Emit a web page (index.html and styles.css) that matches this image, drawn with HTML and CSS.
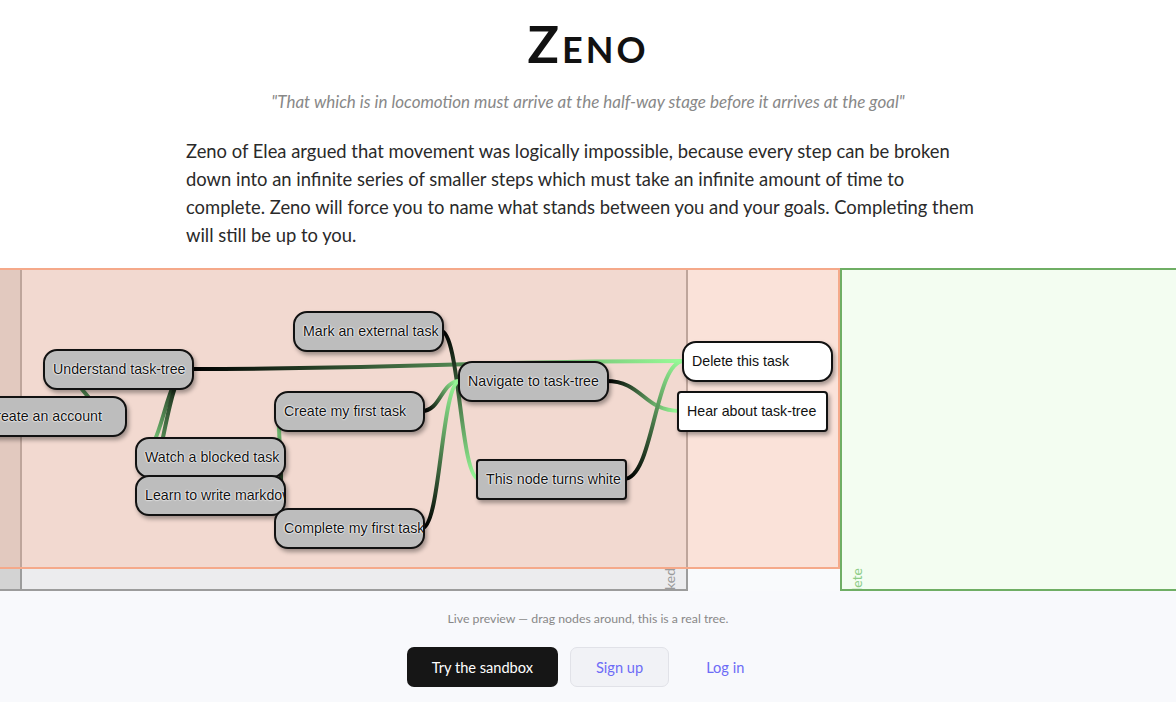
FILE: index.html
```html
<!DOCTYPE html>
<html lang="en">
<head>
<meta charset="utf-8">
<title>Zeno</title>
<link rel="stylesheet" href="styles.css">
</head>
<body>
<header class="hero">
  <h1 class="title">Zeno</h1>
  <p class="quote">"That which is in locomotion must arrive at the half-way stage before it arrives at the goal"</p>
  <p class="intro">Zeno of Elea argued that movement was logically impossible, because every step can be broken down into an infinite series of smaller steps which must take an infinite amount of time to complete. Zeno will force you to name what stands between you and your goals. Completing them will still be up to you.</p>
</header>

<section class="board">
  <div class="lanes">
    <div class="lane lane-root"></div>
    <div class="lane lane-blocked"><span class="lane-label">Blocked</span></div>
    <div class="lane lane-open"></div>
    <div class="lane lane-complete"><span class="lane-label">Complete</span></div>
  </div>

  <div class="zone"></div>

  <svg class="edges" width="1176" height="323" viewBox="0 0 1176 323">
    <defs>
      <linearGradient id="g1" gradientUnits="userSpaceOnUse" x1="193" y1="101" x2="682" y2="93"><stop offset="0" stop-color="#000"/><stop offset="1" stop-color="#98fb98"/></linearGradient>
      <linearGradient id="g2" gradientUnits="userSpaceOnUse" x1="193" y1="101" x2="135" y2="189"><stop offset="0" stop-color="#000"/><stop offset="1" stop-color="#98fb98"/></linearGradient>
      <linearGradient id="g3" gradientUnits="userSpaceOnUse" x1="193" y1="101" x2="135" y2="228"><stop offset="0" stop-color="#000"/><stop offset="1" stop-color="#98fb98"/></linearGradient>
      <linearGradient id="g4" gradientUnits="userSpaceOnUse" x1="127" y1="149" x2="43" y2="101"><stop offset="0" stop-color="#000"/><stop offset="1" stop-color="#98fb98"/></linearGradient>
      <linearGradient id="g5" gradientUnits="userSpaceOnUse" x1="444" y1="63" x2="476" y2="211"><stop offset="0" stop-color="#000"/><stop offset="1" stop-color="#98fb98"/></linearGradient>
      <linearGradient id="g6" gradientUnits="userSpaceOnUse" x1="425" y1="143" x2="458" y2="113"><stop offset="0" stop-color="#000"/><stop offset="1" stop-color="#98fb98"/></linearGradient>
      <linearGradient id="g7" gradientUnits="userSpaceOnUse" x1="425" y1="260" x2="458" y2="113"><stop offset="0" stop-color="#000"/><stop offset="1" stop-color="#98fb98"/></linearGradient>
      <linearGradient id="g8" gradientUnits="userSpaceOnUse" x1="609" y1="113" x2="677" y2="143"><stop offset="0" stop-color="#000"/><stop offset="1" stop-color="#98fb98"/></linearGradient>
      <linearGradient id="g9" gradientUnits="userSpaceOnUse" x1="627" y1="211" x2="682" y2="93"><stop offset="0" stop-color="#000"/><stop offset="1" stop-color="#98fb98"/></linearGradient>
      <linearGradient id="g10" gradientUnits="userSpaceOnUse" x1="286" y1="228" x2="274" y2="143"><stop offset="0" stop-color="#000"/><stop offset="1" stop-color="#98fb98"/></linearGradient>
      <linearGradient id="g11" gradientUnits="userSpaceOnUse" x1="286" y1="189" x2="274" y2="260"><stop offset="0" stop-color="#000"/><stop offset="1" stop-color="#98fb98"/></linearGradient>
    </defs>
    <g class="edge-set">
      <path stroke="url(#g1)" d="M190,101 C437,101 437,93 684,93"/>
      <path stroke="url(#g2)" d="M190,101 C164,101 164,189 138,189"/>
      <path stroke="url(#g3)" d="M190,101 C164,101 164,228 138,228"/>
      <path stroke="url(#g4)" d="M124,149 C85,149 85,101 46,101"/>
      <path stroke="url(#g5)" d="M441,63 C460,63 460,211 479,211"/>
      <path stroke="url(#g6)" d="M422,143 C441,143 441,113 460,113"/>
      <path stroke="url(#g7)" d="M422,260 C441,260 441,113 460,113"/>
      <path stroke="url(#g8)" d="M606,113 C643,113 643,143 680,143"/>
      <path stroke="url(#g9)" d="M624,211 C654,211 654,93 684,93"/>
      <path stroke="url(#g10)" d="M283,228 C280,228 280,143 277,143"/>
      <path stroke="url(#g11)" d="M283,189 C280,189 280,260 277,260"/>
    </g>
  </svg>

  <div class="node" style="left:293px;top:43px">Mark an external task</div>
  <div class="node" style="left:43px;top:81px">Understand task-tree</div>
  <div class="node" style="left:-24px;top:128px">Create an account</div>
  <div class="node" style="left:458px;top:93px">Navigate to task-tree</div>
  <div class="node" style="left:274px;top:123px">Create my first task</div>
  <div class="node" style="left:135px;top:169px">Watch a blocked task</div>
  <div class="node" style="left:135px;top:207px">Learn to write markdown</div>
  <div class="node" style="left:274px;top:240px">Complete my first task</div>
  <div class="node node-square" style="left:476px;top:191px">This node turns white</div>
  <div class="node node-white" style="left:682px;top:73px">Delete this task</div>
  <div class="node node-white node-square" style="left:677px;top:123px">Hear about task-tree</div>
</section>

<footer class="cta">
  <p class="caption">Live preview — drag nodes around, this is a real tree.</p>
  <div class="actions">
    <a class="btn btn-dark" href="#">Try the sandbox</a>
    <a class="btn btn-light" href="#">Sign up</a>
    <a class="btn btn-link" href="#">Log in</a>
  </div>
</footer>
</body>
</html>
```

FILE: styles.css
```css
* { box-sizing: border-box; }
html, body { margin: 0; }
body {
  font-family: Lato, "Open Sans", "Noto Sans", sans-serif;
  color: #222;
  background: #fff;
}

/* ---------- hero ---------- */
.hero {
  padding-top: 13px;
  text-align: center;
}
.title {
  margin: 0;
  font-size: 52px;
  line-height: 60px;
  font-weight: 700;
  font-variant: small-caps;
  letter-spacing: 3px;
  color: #111;
}
.quote {
  margin: 18px 0 0;
  font-style: italic;
  font-size: 17px;
  line-height: 22px;
  color: #888;
}
.intro {
  width: 804px;
  margin: 24px auto 0;
  padding-right: 8px;
  text-align: left;
  font-size: 18.4px;
  line-height: 28px;
  color: #2a2a2a;
}

/* ---------- board ---------- */
.board {
  position: relative;
  margin-top: 19px;
  height: 323px;
  overflow: hidden;
  background: #f9fafc;
}
.lanes {
  display: flex;
  height: 100%;
}
.lane {
  display: flex;
  flex-direction: column;
  padding-top: 300px;
  overflow: hidden;
}
.lane-root {
  flex: 0 0 22px;
  background: #d3d3d3;
  border-right: 2px solid #9c9c9c;
  border-bottom: 2px solid #9c9c9c;
}
.lane-blocked {
  flex: 0 0 666px;
  background: #ececee;
  border-right: 2px solid #9c9c9c;
  border-bottom: 2px solid #9c9c9c;
}
.lane-open {
  flex: 0 0 152px;
}
.lane-complete {
  flex: 1 1 auto;
  background: #f3fdf1;
  border: 2px solid #6fae64;
  border-right: 0;
  padding-top: 298px;
}
.lane-label {
  writing-mode: vertical-rl;
  transform: rotate(180deg);
  font-size: 14px;
  line-height: 16px;
  white-space: nowrap;
}
.lane-blocked .lane-label {
  align-self: flex-end;
  margin-right: 8px;
  color: #9a9a9a;
}
.lane-complete .lane-label {
  align-self: flex-start;
  margin-left: 7px;
  color: #8ccc86;
}

.zone {
  position: absolute;
  left: -10px;
  top: 0;
  width: 850px;
  height: 301px;
  border: 2px solid #f5a98a;
  background: rgba(253, 183, 155, 0.36);
}

.edges {
  position: absolute;
  left: 0;
  top: 0;
  overflow: visible;
}
.edge-set path {
  fill: none;
  stroke-width: 4;
  stroke-linecap: butt;
}

.node {
  position: absolute;
  width: 151px;
  height: 41px;
  padding-left: 8px;
  border: 2px solid #111;
  border-radius: 14px;
  background: #bdbdbd;
  box-shadow: 2px 3px 4px rgba(0, 0, 0, 0.35);
  font-family: "Liberation Sans", Arial, sans-serif;
  font-size: 14.2px;
  line-height: 37px;
  color: #111;
  white-space: nowrap;
  overflow: hidden;
  text-shadow: 0 0 2px #fff, 0 0 2px #fff, 0 0 1px #fff;
}
.node-white { background: #fff; }
.node-square { border-radius: 4px; }

/* ---------- call to action ---------- */
.cta {
  background: #f8f9fc;
  padding: 20px 0 15px;
  text-align: center;
}
.caption {
  margin: 0;
  font-size: 12.3px;
  line-height: 16px;
  color: #888;
}
.actions {
  margin-top: 20px;
  display: flex;
  justify-content: center;
  gap: 12px;
}
.btn {
  display: inline-flex;
  align-items: center;
  height: 40px;
  padding: 0 25px;
  border-radius: 7px;
  font-size: 14.6px;
  text-decoration: none;
}
.btn-dark {
  background: #161616;
  color: #fff;
}
.btn-light {
  background: #f1f2f6;
  border: 1px solid #e1e2e8;
  color: #6d6cf6;
}
.btn-link {
  color: #6d6cf6;
}
```
